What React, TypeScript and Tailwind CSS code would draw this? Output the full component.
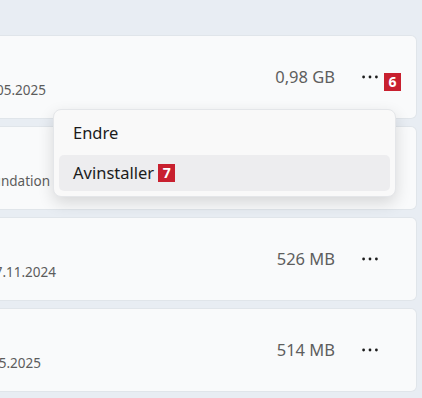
const font = { fontFamily: '"Noto Sans", "Open Sans", sans-serif' }

interface AppRow {
  detail: string
  detailWidth: string
  size: string
  badge?: string
}

const rows: AppRow[] = [
  { detail: "Microsoft Corporation | 13.05.2025", detailWidth: "w-[46px]", size: "0,98 GB", badge: "6" },
  { detail: "Python Software Foundation", detailWidth: "w-[50px]", size: "1,12 GB" },
  { detail: "Oracle Corporation | 27.11.2024", detailWidth: "w-[56px]", size: "526 MB" },
  { detail: "Mozilla | 15.05.2025", detailWidth: "w-[41px]", size: "514 MB" }
]

function Dots() {
  return (
    <svg width="16" height="4" viewBox="0 0 16 4" className="text-[#1c1c1c]">
      <circle cx="1.6" cy="2" r="1.4" fill="currentColor" />
      <circle cx="8" cy="2" r="1.4" fill="currentColor" />
      <circle cx="14.4" cy="2" r="1.4" fill="currentColor" />
    </svg>
  )
}

function Badge({ n }: { n: string }) {
  return (
    <span className="inline-flex h-[18px] w-[17px] items-center justify-center bg-[#c8202f] text-[14px] leading-none font-bold text-white">
      {n}
    </span>
  )
}

function AppCard({ row }: { row: AppRow }) {
  return (
    <div className="relative flex h-[84px] items-center rounded-r-[6px] border border-l-0 border-[#e0e5ea] bg-[#f9fafb]">
      <div className={`${row.detailWidth} mt-[27px] flex justify-end`}>
        <span className="text-[13.5px] whitespace-nowrap text-[#5c5c5c]">{row.detail}</span>
      </div>
      <div className="ml-auto flex items-center gap-[27px] pr-[38px]">
        <span className="text-[16.5px] text-[#5e5e5e]">{row.size}</span>
        <Dots />
      </div>
      {row.badge && (
        <div className="absolute top-[33px] right-[15px]">
          <Badge n={row.badge} />
        </div>
      )}
    </div>
  )
}

function ContextMenu() {
  return (
    <div className="absolute top-[109px] left-[53px] flex w-[343px] flex-col gap-[4px] rounded-[8px] border border-[#e4e6e9] bg-[#f9f9f9] p-[5px] shadow-[0_6px_16px_rgba(0,0,0,0.14)]">
      <div className="flex h-9 items-center rounded-[5px] pl-[14px] text-[16.5px] text-[#1b1b1b]">Endre</div>
      <div className="flex h-9 items-center gap-[4px] rounded-[5px] bg-[#ededef] pl-[14px] text-[16.5px] text-[#1b1b1b]">
        Avinstaller
        <Badge n="7" />
      </div>
    </div>
  )
}

export default function App() {
  return (
    <div className="relative h-[398px] w-[422px] overflow-hidden bg-[#e8edf3]" style={font}>
      <div className="flex flex-col gap-[7px] pt-[35px] pr-[5px]">
        {rows.map((r) => (
          <AppCard row={r} key={r.detail} />
        ))}
      </div>
      <ContextMenu />
    </div>
  )
}
